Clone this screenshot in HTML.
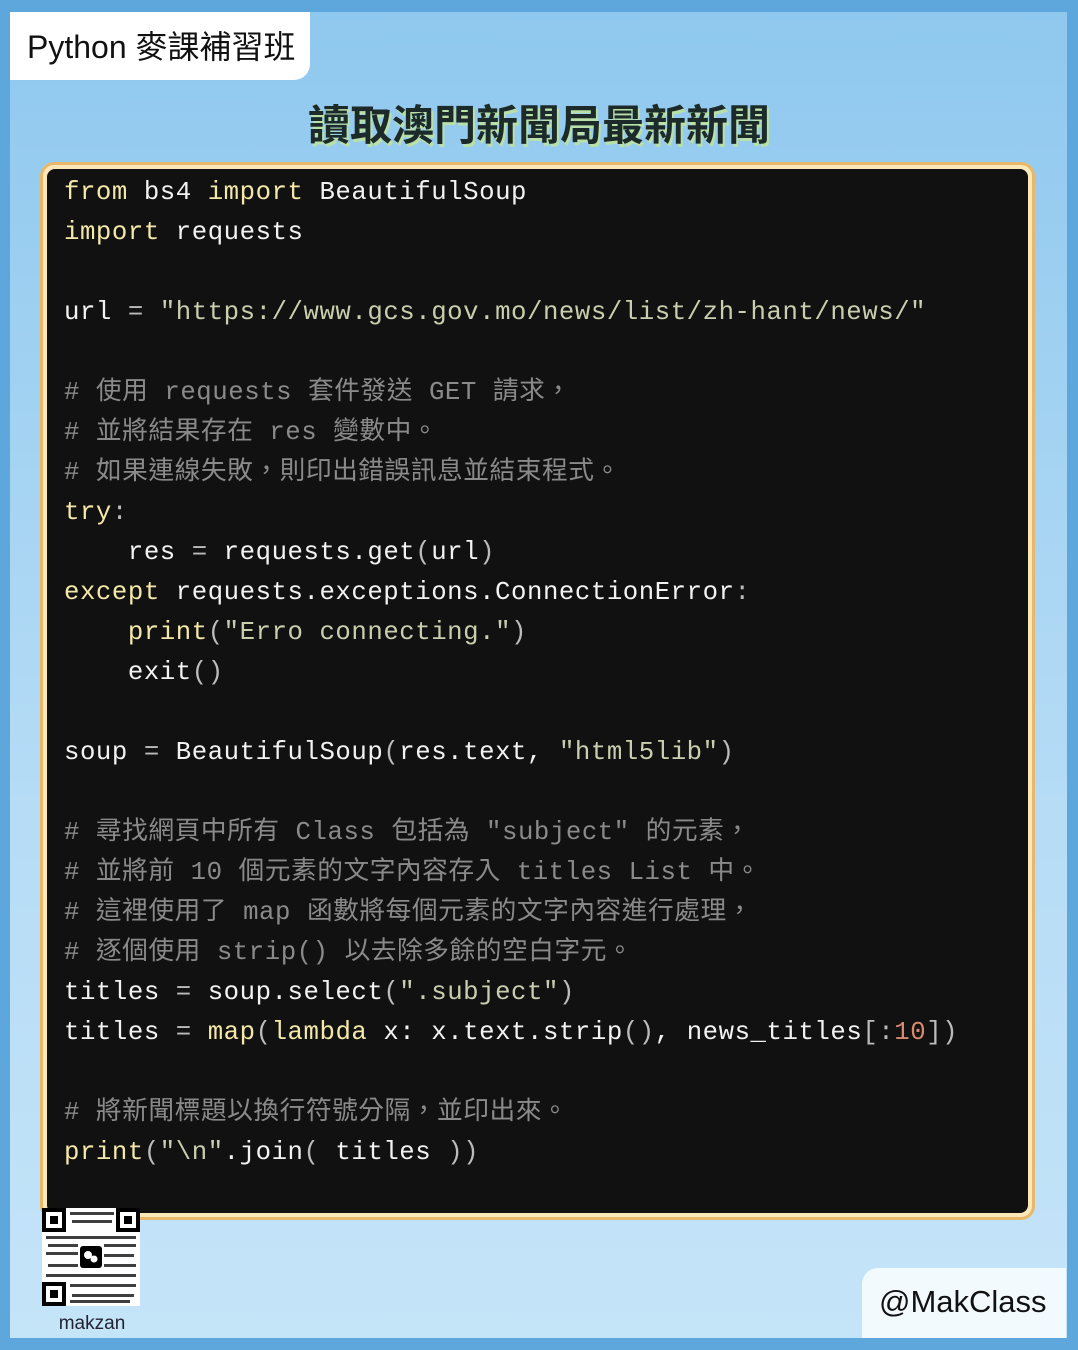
<!DOCTYPE html>
<html><head><meta charset="utf-8"><style>
*{margin:0;padding:0;box-sizing:border-box}
body{width:1078px;height:1350px;background:#5ea7dc;position:relative;overflow:hidden}
.inner{position:absolute;left:10px;top:12px;width:1057px;height:1326px;background:linear-gradient(180deg,#8fc8ee 0%,#b6dcf6 60%,#c4e4f8 100%)}
.tag{position:absolute;left:10px;top:12px;width:300px;height:68px;background:#fff;border-radius:0 0 16px 0;font:32px "Liberation Sans","Noto Sans CJK TC",sans-serif;color:#111;padding:10px 0 0 17px}
.title{position:absolute;left:0;width:1078px;top:92px;text-align:center;font:bold 42px "Liberation Sans","Noto Sans CJK TC",sans-serif;color:#1c2a2a;text-shadow:2px 3px 0 #b8e0a8}
.box{position:absolute;left:40px;top:162px;width:995px;height:1058px;border:3px solid #e8b86a;border-radius:14px;background:#fce7b8;padding:4px}
.code{width:100%;height:100%;background:#111;border-radius:8px;padding:4px 0 0 17px;font:25.7px/40px "Liberation Mono","Noto Sans CJK TC",monospace;letter-spacing:0.55px;color:#f2f2f2;white-space:pre}
.k{color:#f4e8a8}.s{color:#c9cfae}.c{color:#8a8a8a}.n{color:#d88a6e}.p{color:#bbb}
.qr{position:absolute;left:42px;top:1208px;width:98px;height:98px;background:#fff}
.mk{position:absolute;left:40px;top:1313px;width:104px;text-align:center;font:19px "Liberation Sans",sans-serif;color:#223}
.at{position:absolute;left:862px;top:1268px;width:204px;height:70px;background:#f2fafe;border-radius:16px 0 0 0;font:31px "Liberation Sans",sans-serif;color:#111;padding:16px 0 0 17px}
</style></head><body>
<div class="inner"></div>
<div class="tag">Python 麥課補習班</div>
<div class="title">讀取澳門新聞局最新新聞</div>
<div class="box"><div class="code"><span class="k">from</span> bs4 <span class="k">import</span> BeautifulSoup
<span class="k">import</span> requests

url <span class="p">=</span> <span class="s">"https://www.gcs.gov.mo/news/list/zh-hant/news/"</span>

<span class="c"># 使用 requests 套件發送 GET 請求，</span>
<span class="c"># 並將結果存在 res 變數中。</span>
<span class="c"># 如果連線失敗，則印出錯誤訊息並結束程式。</span>
<span class="k">try</span><span class="p">:</span>
    res <span class="p">=</span> requests.get<span class="p">(</span>url<span class="p">)</span>
<span class="k">except</span> requests.exceptions.ConnectionError<span class="p">:</span>
    <span class="k">print</span><span class="p">(</span><span class="s">"Erro connecting."</span><span class="p">)</span>
    exit<span class="p">()</span>

soup <span class="p">=</span> BeautifulSoup<span class="p">(</span>res.text, <span class="s">"html5lib"</span><span class="p">)</span>

<span class="c"># 尋找網頁中所有 Class 包括為 "subject" 的元素，</span>
<span class="c"># 並將前 10 個元素的文字內容存入 titles List 中。</span>
<span class="c"># 這裡使用了 map 函數將每個元素的文字內容進行處理，</span>
<span class="c"># 逐個使用 strip() 以去除多餘的空白字元。</span>
titles <span class="p">=</span> soup.select<span class="p">(</span><span class="s">".subject"</span><span class="p">)</span>
titles <span class="p">=</span> <span class="k">map</span><span class="p">(</span><span class="k">lambda</span> x: x.text.strip<span class="p">()</span>, news_titles<span class="p">[:</span><span class="n">10</span><span class="p">])</span>

<span class="c"># 將新聞標題以換行符號分隔，並印出來。</span>
<span class="k">print</span><span class="p">(</span><span class="s">"\n"</span>.join<span class="p">(</span> titles <span class="p">))</span></div></div>
<svg class="qr" viewBox="0 0 98 98">
<rect x="2" y="2" width="20" height="20" fill="none" stroke="#000" stroke-width="4"/><rect x="8" y="8" width="8" height="8"/>
<rect x="76" y="2" width="20" height="20" fill="none" stroke="#000" stroke-width="4"/><rect x="82" y="8" width="8" height="8"/>
<rect x="2" y="76" width="20" height="20" fill="none" stroke="#000" stroke-width="4"/><rect x="8" y="82" width="8" height="8"/>
<g fill="#000" opacity=".75"><rect x="28" y="4" width="44" height="3"/><rect x="30" y="12" width="40" height="3"/><rect x="4" y="28" width="90" height="3"/><rect x="6" y="36" width="30" height="3"/><rect x="62" y="36" width="32" height="3"/><rect x="4" y="44" width="32" height="3"/><rect x="62" y="46" width="30" height="3"/><rect x="6" y="56" width="30" height="3"/><rect x="62" y="56" width="32" height="3"/><rect x="4" y="66" width="90" height="3"/><rect x="28" y="76" width="66" height="3"/><rect x="30" y="86" width="62" height="3"/><rect x="28" y="92" width="60" height="3"/></g>
<rect x="38" y="38" width="22" height="22" rx="3"/><circle cx="46" cy="47" r="4" fill="#fff"/><circle cx="52" cy="51" r="3.5" fill="#fff"/>
</svg>
<div class="mk">makzan</div>
<div class="at">@MakClass</div>
</body></html>
